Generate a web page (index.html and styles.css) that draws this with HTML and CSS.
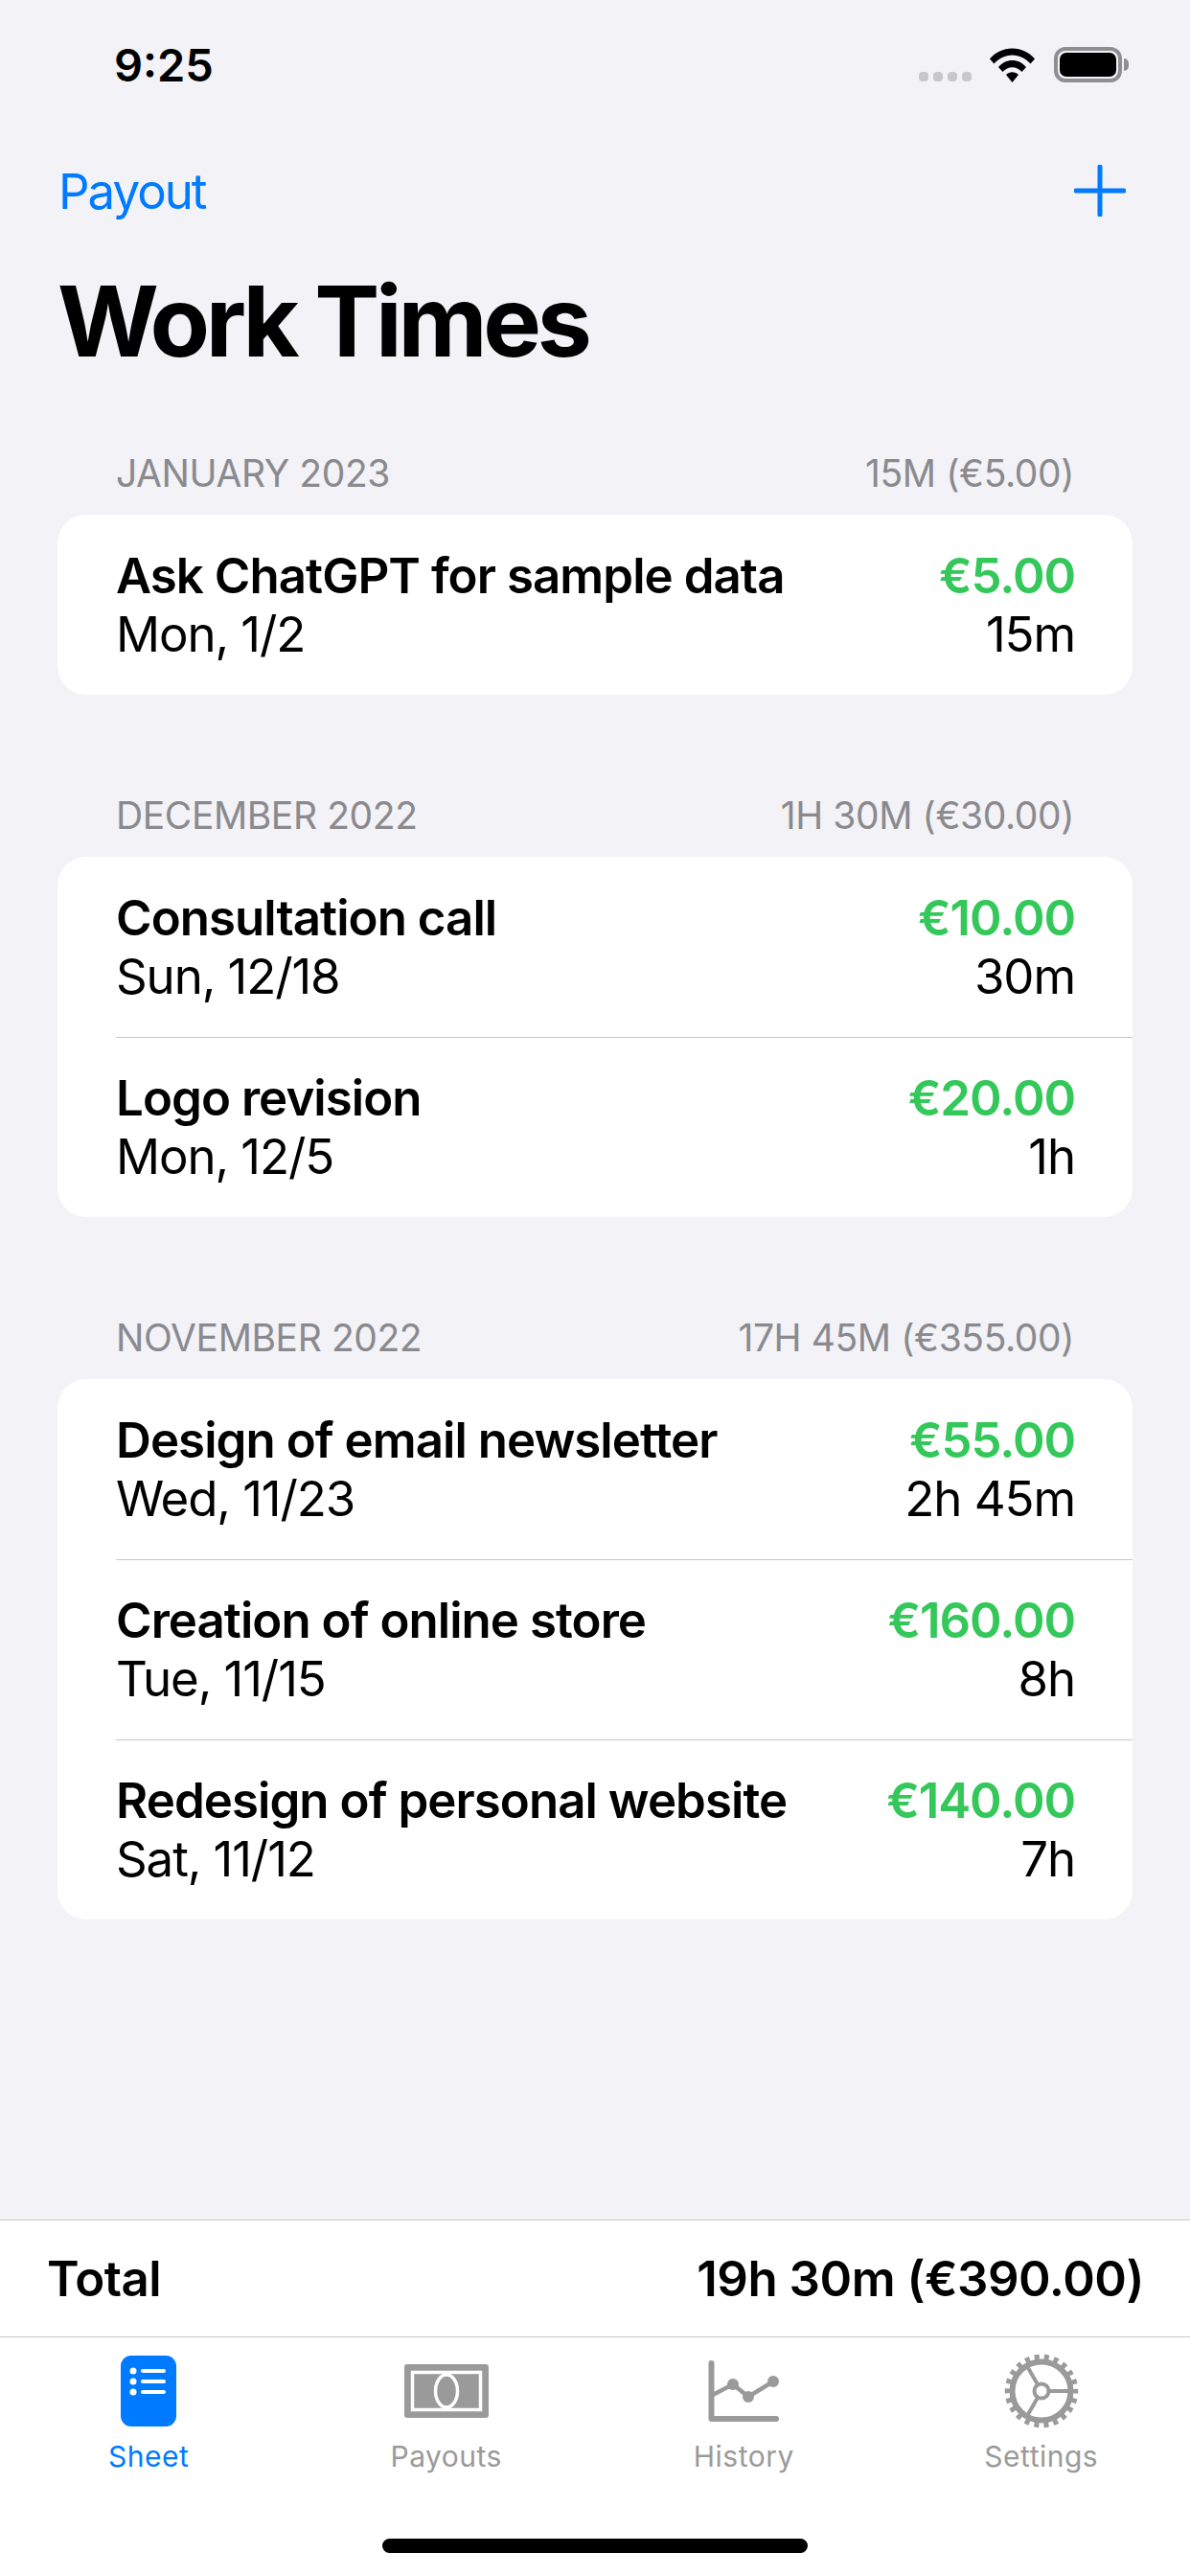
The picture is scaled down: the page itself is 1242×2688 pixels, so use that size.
FILE: index.html
```html
<!DOCTYPE html>
<html lang="en">
<head>
    <meta charset="UTF-8">
    <meta name="viewport" content="width=device-width, initial-scale=1.0">
    <title>Work Times</title>
    <link rel="stylesheet" href="styles.css">
</head>
<body>
    <div class="status-bar">
        <span class="clock">9:25</span>
        <div class="status-icons">
            <div class="signal"><i></i><i></i><i></i><i></i></div>
            <svg class="wifi" width="47" height="36" viewBox="0 0 47 36">
                <path d="M0 11.5C6 4.5 14 .5 23.5 .5S41 4.5 47 11.5L42.5 16.5C37.5 11 31 7.500 23.500 7.500S9.500 11 4.500 16.500Z"/>
                <path d="M9 20C13 15.500 18 13 23.500 13S34 15.500 38 20L33.500 25C30.500 22 27.500 20.300 23.500 20.300S16.500 22 13.500 25Z"/>
                <path d="M17 28C19 26.200 21 25.300 23.500 25.300S28 26.200 30 28L23.500 36Z"/>
            </svg>
            <div class="battery"><div class="battery-level"></div></div>
        </div>
    </div>

    <div class="nav-bar">
        <span class="nav-link">Payout</span>
        <svg class="nav-add" width="54" height="54" viewBox="0 0 54 54">
            <path d="M27 2V52M2 27H52"/>
        </svg>
    </div>
    <h1>Work Times</h1>

    <main class="sheet">
        <section class="month">
            <div class="month-head"><span>January 2023</span><span>15m (€5.00)</span></div>
            <div class="card">
                <div class="row">
                    <div class="row-line"><span class="job">Ask ChatGPT for sample data</span><span class="amount">€5.00</span></div>
                    <div class="row-line"><span>Mon, 1/2</span><span>15m</span></div>
                </div>
            </div>
        </section>

        <section class="month">
            <div class="month-head"><span>December 2022</span><span>1h 30m (€30.00)</span></div>
            <div class="card">
                <div class="row">
                    <div class="row-line"><span class="job">Consultation call</span><span class="amount">€10.00</span></div>
                    <div class="row-line"><span>Sun, 12/18</span><span>30m</span></div>
                </div>
                <div class="row">
                    <div class="row-line"><span class="job">Logo revision</span><span class="amount">€20.00</span></div>
                    <div class="row-line"><span>Mon, 12/5</span><span>1h</span></div>
                </div>
            </div>
        </section>

        <section class="month">
            <div class="month-head"><span>November 2022</span><span>17h 45m (€355.00)</span></div>
            <div class="card">
                <div class="row">
                    <div class="row-line"><span class="job">Design of email newsletter</span><span class="amount">€55.00</span></div>
                    <div class="row-line"><span>Wed, 11/23</span><span>2h 45m</span></div>
                </div>
                <div class="row">
                    <div class="row-line"><span class="job">Creation of online store</span><span class="amount">€160.00</span></div>
                    <div class="row-line"><span>Tue, 11/15</span><span>8h</span></div>
                </div>
                <div class="row">
                    <div class="row-line"><span class="job">Redesign of personal website</span><span class="amount">€140.00</span></div>
                    <div class="row-line"><span>Sat, 11/12</span><span>7h</span></div>
                </div>
            </div>
        </section>
    </main>

    <div class="total-bar">
        <span>Total</span>
        <span>19h 30m (€390.00)</span>
    </div>

    <nav class="tab-bar">
        <div class="tab active">
            <svg width="90" height="80" viewBox="0 0 90 80">
                <rect x="16" y="3" width="58" height="74" rx="11" fill="#007aff"/>
                <g fill="#fff">
                    <circle cx="29" cy="19" r="3.500"/>
                    <circle cx="29" cy="30" r="3.500"/>
                    <circle cx="29" cy="41" r="3.500"/>
                    <rect x="37" y="17" width="26" height="4" rx="2"/>
                    <rect x="37" y="28" width="26" height="4" rx="2"/>
                    <rect x="37" y="39" width="26" height="4" rx="2"/>
                </g>
            </svg>
            <span>Sheet</span>
        </div>
        <div class="tab">
            <svg width="90" height="80" viewBox="0 0 90 80">
                <rect x="1" y="12" width="88" height="56" rx="3" fill="#9a9a9a"/>
                <rect x="9.500" y="20.500" width="71" height="39" fill="none" stroke="#fff" stroke-width="3.500"/>
                <ellipse cx="45" cy="40" rx="11.500" ry="17" fill="#9a9a9a" stroke="#fff" stroke-width="3.500"/>
            </svg>
            <span>Payouts</span>
        </div>
        <div class="tab">
            <svg width="90" height="80" viewBox="0 0 90 80">
                <path d="M11.500 11V69H79" fill="none" stroke="#9a9a9a" stroke-width="6" stroke-linecap="round" stroke-linejoin="round"/>
                <path d="M13 44L34 33L50 46L76 30" fill="none" stroke="#9a9a9a" stroke-width="4.500"/>
                <g fill="#9a9a9a">
                    <circle cx="34" cy="33" r="6"/>
                    <circle cx="50" cy="46" r="6"/>
                    <circle cx="76" cy="30" r="6"/>
                </g>
            </svg>
            <span>History</span>
        </div>
        <div class="tab">
            <svg width="90" height="80" viewBox="0 0 90 80">
                <g fill="none" stroke="#9a9a9a">
                    <circle cx="45" cy="40" r="30.500" stroke-width="6"/>
                    <circle cx="45" cy="40" r="35.500" stroke-width="5.500" stroke-dasharray="5 5.139" stroke-dashoffset="2.500"/>
                    <circle cx="45" cy="40" r="7.500" stroke-width="4"/>
                    <path d="M52.500 40H74M41.200 33.500L30 14M41.200 46.500L30 66" stroke-width="4"/>
                </g>
            </svg>
            <span>Settings</span>
        </div>
        <div class="home-bar"></div>
    </nav>
</body>
</html>
```

FILE: styles.css
```css
/* General Styles */
body {
    margin: 0;
    width: 1242px;
    height: 2688px;
    background: #f2f2f7;
    font-family: 'Inter', 'Liberation Sans', sans-serif;
    color: #000;
    display: flex;
    flex-direction: column;
    overflow: hidden;
}

/* Status Bar */
.status-bar {
    height: 166px;
    box-sizing: border-box;
    padding: 44px 71px 0 119px;
    display: flex;
    justify-content: space-between;
    align-items: flex-start;
}

.clock {
    font-size: 47px;
    font-weight: 600;
    line-height: 48px;
}

.status-icons {
    display: flex;
    align-items: flex-end;
    padding-top: 5px;
}

.signal {
    display: flex;
    gap: 5px;
    margin-right: 19px;
    margin-bottom: 1px;
}

.signal i {
    width: 10px;
    height: 10px;
    border-radius: 4px;
    background: #c7c7cc;
}

.wifi {
    fill: #000;
    margin-right: 20px;
}

.battery {
    width: 71px;
    height: 37px;
    box-sizing: border-box;
    border: 4px solid #8e8e93;
    border-radius: 12px;
    padding: 2px;
    position: relative;
}

.battery::after {
    content: '';
    position: absolute;
    right: -11px;
    top: 8px;
    width: 5px;
    height: 13px;
    background: #8e8e93;
    border-radius: 0 5px 5px 0;
}

.battery-level {
    height: 100%;
    background: #000;
    border-radius: 7px;
}

/* Nav */
.nav-bar {
    height: 66px;
    padding: 0 67px 0 61px;
    display: flex;
    justify-content: space-between;
    align-items: center;
}

.nav-link {
    font-size: 51px;
    color: #007aff;
    letter-spacing: -2px;
}

.nav-add {
    stroke: #007aff;
    stroke-width: 5;
    stroke-linecap: round;
    fill: none;
}

h1 {
    margin: 41px 0 0;
    padding-left: 60px;
    font-size: 102px;
    font-weight: 700;
    line-height: 124px;
    letter-spacing: -4.300px;
}

/* Month Groups */
.sheet {
    flex: 1;
    padding: 0 60px;
    margin-top: 73px;
}

.month {
    margin-bottom: 102px;
}

.month-head {
    display: flex;
    justify-content: space-between;
    padding: 0 61px;
    height: 67px;
    font-size: 39px;
    line-height: 48px;
    letter-spacing: -0.400px;
    color: #8a8a8e;
    text-transform: uppercase;
}

.card {
    background: #fff;
    border-radius: 30px;
    overflow: hidden;
}

.row {
    margin-left: 61px;
    padding: 33px 60px 33px 0;
}

.row + .row {
    border-top: 1px solid #c6c6c8;
    padding-top: 32px;
}

.row-line {
    display: flex;
    justify-content: space-between;
    font-size: 51px;
    line-height: 61px;
    letter-spacing: -1.100px;
}

.job {
    font-weight: 600;
    letter-spacing: -0.950px;
}

.amount {
    font-weight: 600;
    letter-spacing: -1.100px;
    color: #34c759;
}

/* Footer */
.total-bar {
    height: 121px;
    padding: 0 48px 0 49px;
    background: #fff;
    border-top: 1px solid #c8c8c8;
    border-bottom: 1px solid #c8c8c8;
    display: flex;
    justify-content: space-between;
    align-items: center;
    font-size: 51px;
    font-weight: 600;
    letter-spacing: -0.500px;
}

.tab-bar {
    height: 249px;
    background: #fff;
    display: grid;
    grid-template-columns: repeat(4, 1fr);
    position: relative;
}

.tab {
    padding-top: 16px;
    display: flex;
    flex-direction: column;
    align-items: center;
    font-size: 30px;
    line-height: 36px;
    letter-spacing: 0.500px;
    color: #9a9a9a;
}

.tab.active {
    color: #007aff;
}

.tab svg {
    margin-bottom: 10px;
}

.home-bar {
    position: absolute;
    left: 399px;
    bottom: 24px;
    width: 444px;
    height: 15px;
    border-radius: 8px;
    background: #000;
}
```
